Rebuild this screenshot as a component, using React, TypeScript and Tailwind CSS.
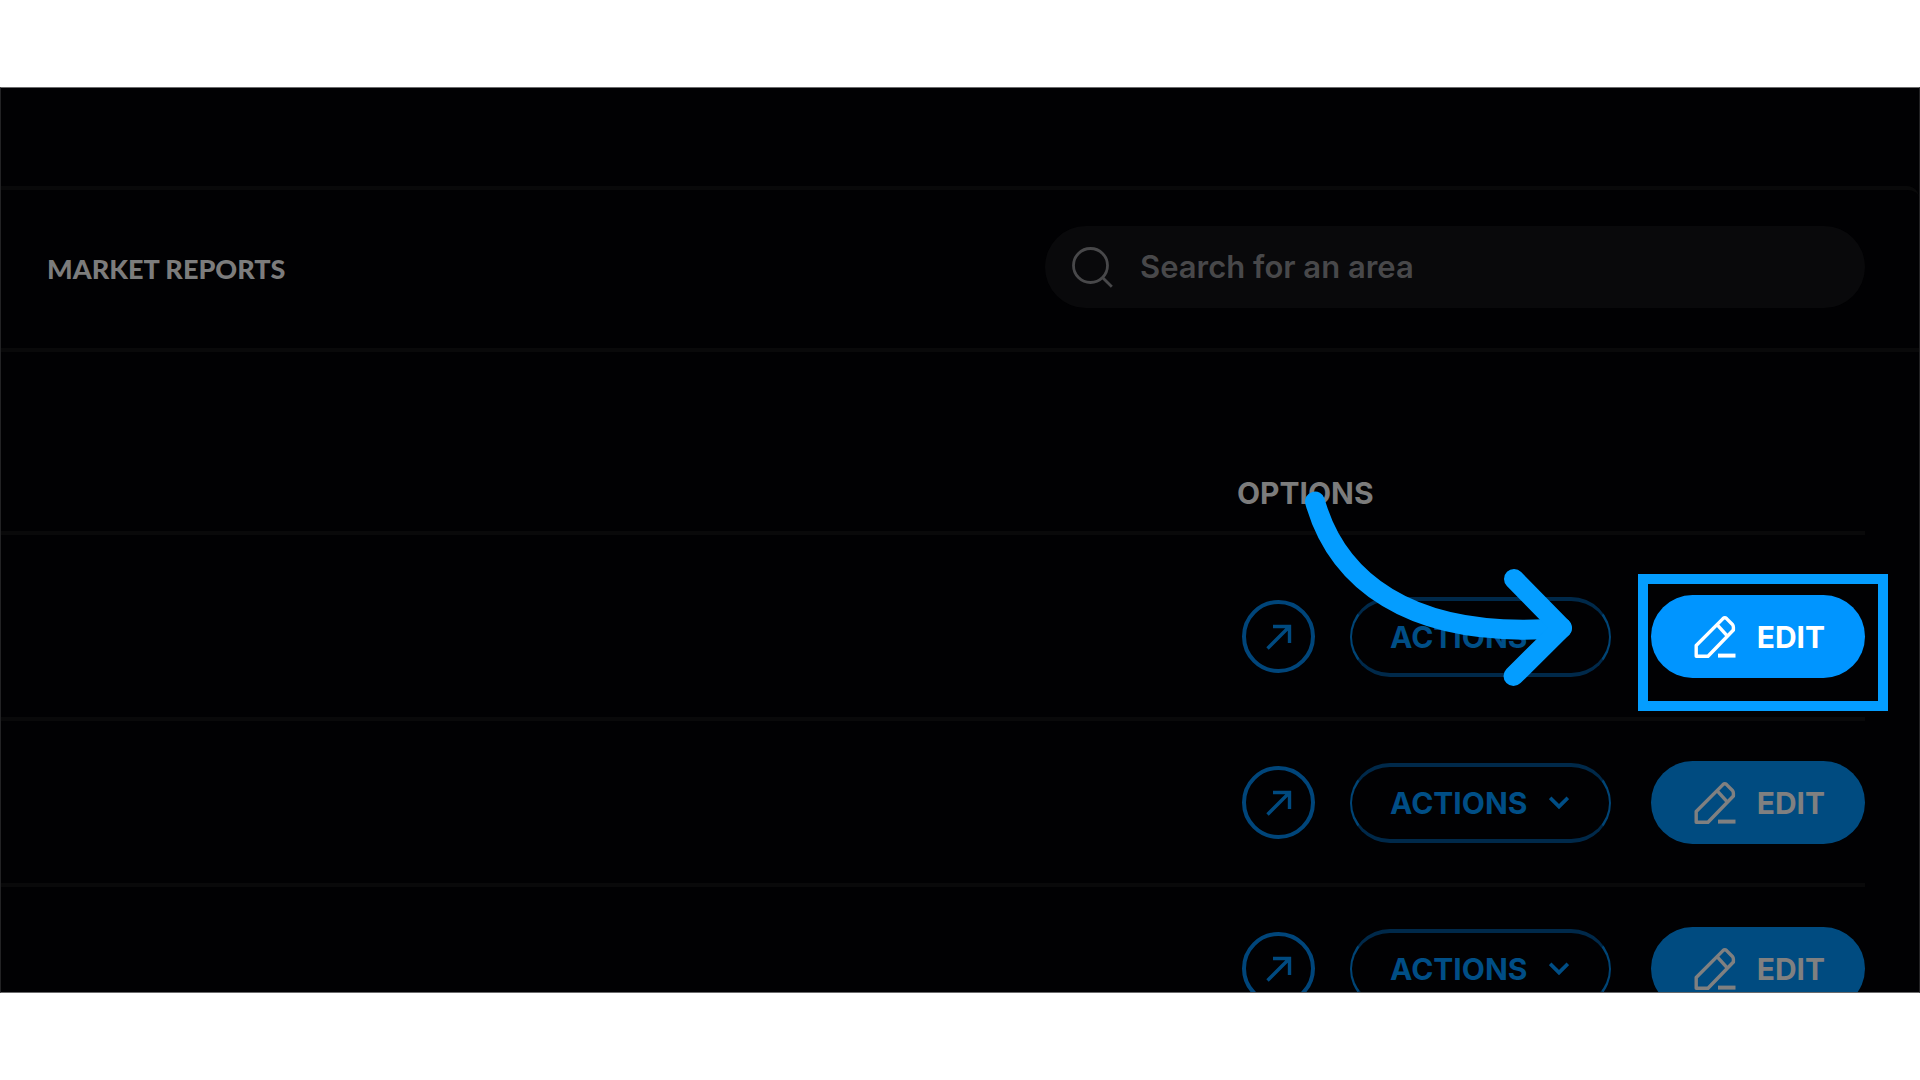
import React from 'react';
import clsx from 'clsx';

interface Report {
    id: number;
    highlighted?: boolean;
}

const reports: Report[] = [
    { id: 1, highlighted: true },
    { id: 2 },
    { id: 3 },
];

const SearchIcon = () => (
    <svg width="42" height="42" viewBox="0 0 42 42" fill="none" stroke="currentColor" strokeWidth="2.8" aria-hidden="true" className="shrink-0">
        <circle cx="19.5" cy="19.5" r="17" />
        <path d="M31.5 31.5 L40.8 40.8" />
    </svg>
);

const OpenIcon = () => (
    <svg width="26" height="26" viewBox="0 0 26 26" fill="none" stroke="currentColor" strokeWidth="3.4" aria-hidden="true">
        <path d="M1.5 24.5 L23.5 2.5 M7 2.5 H23.5 V19" />
    </svg>
);

const ChevronIcon = () => (
    <svg width="20" height="14" viewBox="0 0 20 14" fill="none" stroke="currentColor" strokeWidth="3.6" aria-hidden="true">
        <path d="M1.2 1.8 L10 10.6 L18.8 1.8" />
    </svg>
);

const PenIcon = () => (
    <svg width="42" height="44" viewBox="0 0 42 44" fill="none" stroke="currentColor" strokeWidth="3.4" strokeLinejoin="round" aria-hidden="true">
        <path d="M2.2 41.2 V30.5 L29 3.6 Q30.8 1.9 32.6 3.6 L38.2 9.2 Q39.6 10.8 39.4 13 V15 L14 41.2 Z" />
        <path d="M23 9.6 L33 20.6" />
        <path d="M24 40.6 H41.5" strokeWidth="4" />
    </svg>
);

// Curved pointer from the column header to the edit button
const PointerArrow = () => (
    <svg
        width="280"
        height="210"
        viewBox="0 0 280 210"
        fill="none"
        stroke="#049dff"
        strokeWidth="20"
        strokeLinecap="round"
        strokeLinejoin="round"
        aria-hidden="true"
        className="absolute right-7 -top-28 pointer-events-none"
    >
        <path d="M12 16.5 C33 91 102 156 259 143" />
        <path d="M211 94 L259 143 L210.5 191" />
    </svg>
);

const ReportOptions = ({ highlighted }: { highlighted?: boolean }) => (
    <div className="flex items-center justify-end">
        <button
            type="button"
            aria-label="Open report"
            className="w-[73px] h-[73px] mr-[35px] rounded-full border-4 border-[#00457a] text-[#004a80] flex items-center justify-center"
        >
            <OpenIcon />
        </button>
        <div className="relative mr-10">
            <button
                type="button"
                className="h-20 w-[261px] pl-[38px] pr-10 rounded-full border-x-2 border-y-4 border-x-[#004475] border-y-[#00294a] text-[#004e86] text-[30px] leading-9 font-bold flex items-center justify-between"
            >
                ACTIONS
                <ChevronIcon />
            </button>
            {highlighted && <PointerArrow />}
        </div>
        <div className="relative">
            <button
                type="button"
                className={clsx(
                    'h-[83px] w-[214px] pl-[43px] pr-10 rounded-full text-[30px] leading-9 font-bold flex items-center justify-between',
                    highlighted ? 'bg-[#0095ff] text-white' : 'bg-[#004b80] text-[#808080]'
                )}
            >
                <PenIcon />
                EDIT
            </button>
            {highlighted && (
                <div className="absolute -left-[13px] -right-[23px] -top-[21px] -bottom-[33px] border-10 border-[#049dff] pointer-events-none" />
            )}
        </div>
    </div>
);

export default function App() {
    return (
        <div className="h-screen bg-white py-[87px] flex flex-col font-['Inter',sans-serif]">
            <main className="flex-1 min-h-0 overflow-hidden bg-[#010103] border-x border-y border-x-[#222224] border-y-[#6b6b6c]">
                {/* Top bar */}
                <div className="h-[98px]" />

                <section className="border-t-4 border-[#09090a] rounded-tr-xl">
                    {/* Header */}
                    <header className="flex items-center justify-between pl-[46px] pr-[54px] py-9 border-b-4 border-[#09090a]">
                        <h1 className="font-['Lato',sans-serif] font-black text-[27px] leading-9 text-[#7c7c7c]">MARKET REPORTS</h1>
                        <label className="flex items-center gap-[27px] w-[820px] h-[82px] mb-1 px-[26px] rounded-full bg-[#09090b] text-[#48484a]">
                            <SearchIcon />
                            <input
                                type="text"
                                aria-label="Search for an area"
                                placeholder="Search for an area"
                                className="flex-1 min-w-0 bg-transparent text-[31px] leading-9 font-semibold placeholder:text-[#48484a] focus:outline-none"
                            />
                        </label>
                    </header>

                    {/* Reports */}
                    <div className="pr-[54px]">
                        <table className="w-full border-separate border-spacing-0">
                            <thead>
                                <tr>
                                    <th
                                        scope="col"
                                        className="h-[183px] pb-5 align-bottom border-b-4 border-[#09090a] text-[30px] leading-9 font-bold text-[#7c7c7c]"
                                    >
                                        <div className="w-[628px] ml-auto text-left">OPTIONS</div>
                                    </th>
                                </tr>
                            </thead>
                            <tbody>
                                {reports.map((report) => (
                                    <tr key={report.id}>
                                        <td className={clsx('pb-[39px] border-b-4 border-[#09090a]', report.highlighted ? 'pt-[60px]' : 'pt-10')}>
                                            <ReportOptions highlighted={report.highlighted} />
                                        </td>
                                    </tr>
                                ))}
                            </tbody>
                        </table>
                    </div>
                </section>
            </main>
        </div>
    );
}
